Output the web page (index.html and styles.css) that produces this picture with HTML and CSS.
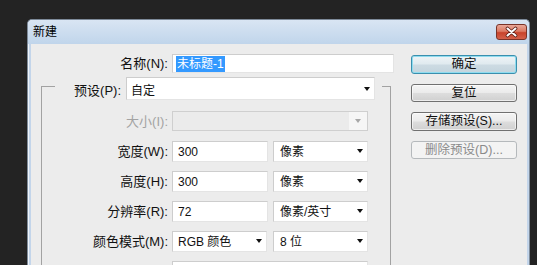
FILE: index.html
```html
<!DOCTYPE html>
<html lang="zh-CN">
<head>
    <meta charset="UTF-8">
    <title>新建</title>
    <link rel="stylesheet" href="styles.css">
</head>
<body>
    <div class="window">
        <!-- Title bar -->
        <div class="titlebar">
            <span class="title">新建</span>
            <button class="close-btn" title="关闭">
                <svg width="29" height="14" viewBox="0 0 29 14">
                    <path d="M10.5 3.5 L18.5 10.5 M18.5 3.5 L10.5 10.5" stroke="#5a1a12" stroke-width="3.6" stroke-linecap="round"/>
                    <path d="M10.5 3.5 L18.5 10.5 M18.5 3.5 L10.5 10.5" stroke="#fff" stroke-width="2" stroke-linecap="round"/>
                </svg>
            </button>
        </div>

        <div class="client">
            <div class="form">
                <div class="row name-row">
                    <label class="lbl name-lbl">名称(N):</label>
                    <div class="field name-field"><span class="selected">未标题-1</span></div>
                </div>

                <!-- Preset group box -->
                <div class="group">
                    <div class="legend">
                        <label class="lbl legend-lbl">预设(P):</label>
                        <div class="select preset-select">自定<span class="arrow"></span></div>
                    </div>

                    <div class="row">
                        <label class="lbl group-lbl disabled">大小(I):</label>
                        <div class="select size-select disabled-select"><span class="drop"><span class="arrow"></span></span></div>
                    </div>
                    <div class="row">
                        <label class="lbl group-lbl">宽度(W):</label>
                        <div class="field num-field">300</div>
                        <div class="select unit-select">像素<span class="arrow"></span></div>
                    </div>
                    <div class="row">
                        <label class="lbl group-lbl">高度(H):</label>
                        <div class="field num-field">300</div>
                        <div class="select unit-select">像素<span class="arrow"></span></div>
                    </div>
                    <div class="row">
                        <label class="lbl group-lbl">分辨率(R):</label>
                        <div class="field num-field">72</div>
                        <div class="select unit-select">像素/英寸<span class="arrow"></span></div>
                    </div>
                    <div class="row">
                        <label class="lbl group-lbl">颜色模式(M):</label>
                        <div class="select mode-select">RGB 颜色<span class="arrow"></span></div>
                        <div class="select unit-select">8 位<span class="arrow"></span></div>
                    </div>
                    <div class="row">
                        <label class="lbl group-lbl"></label>
                        <div class="field wide-field"></div>
                    </div>
                </div>
            </div>

            <!-- Dialog buttons -->
            <div class="buttons">
                <button class="btn default-btn">确定</button>
                <button class="btn">复位</button>
                <button class="btn">存储预设(S)...</button>
                <button class="btn" disabled>删除预设(D)...</button>
            </div>
        </div>
    </div>
</body>
</html>
```

FILE: styles.css
```css
body {
    margin: 0;
    padding: 19px 0 0 27px;
    background-color: #232323;
    font-family: "Liberation Sans", "Noto Sans CJK SC", sans-serif;
    font-size: 12px;
    color: #111;
    height: 265px;
    box-sizing: border-box;
    overflow: hidden;
}

.window {
    width: 503px;
    height: 246px;
    box-sizing: border-box;
    border: 1px solid #7d8a99;
    border-bottom: none;
    border-radius: 5px 5px 0 0;
    background: #c3d5ea;
    box-shadow: inset 1px 1px 0 #eef3f9;
    overflow: hidden;
}

/* Title bar */
.titlebar {
    height: 24px;
    display: flex;
    justify-content: space-between;
    align-items: flex-start;
    background: linear-gradient(#d9e5f3, #c0d5eb);
    border-radius: 4px 4px 0 0;
}

.title {
    align-self: center;
    padding-left: 5px;
    line-height: 16px;
    color: #000;
}

.close-btn {
    margin: 4px 2px 0 0;
    width: 31px;
    height: 16px;
    padding: 0;
    border: 1px solid #7a3328;
    border-radius: 3px;
    background: linear-gradient(#e9a899 0%, #dc7a63 45%, #c8432b 55%, #d4614a 100%);
    display: flex;
    align-items: center;
    justify-content: center;
}

.close-btn svg {
    display: block;
}

/* Client area */
.client {
    margin: 0 2px 0 3px;
    height: 230px;
    background-color: #ececec;
    display: flex;
    padding: 10px 10px 0 0;
    box-sizing: border-box;
}

.form {
    width: 363px;
}

.row {
    display: flex;
    align-items: center;
    height: 20px;
    margin-top: 10px;
}

.lbl {
    text-align: right;
    font-size: 13px;
    line-height: 16px;
    padding-top: 2px;
    white-space: nowrap;
    color: #111;
}

.lbl.disabled {
    color: #a3a3a3;
}

.name-row {
    margin-top: 0;
    height: 19px;
}

.name-lbl {
    width: 137px;
    margin-right: 4px;
    padding-top: 0;
}

.group-lbl {
    width: 126px;
    margin-right: 4px;
}

.field,
.select {
    box-sizing: border-box;
    height: 20px;
    background-color: #fff;
    border: 1px solid;
    border-color: #cdcdcd #e4e4e4 #e4e4e4 #cdcdcd;
    padding-left: 4px;
    padding-top: 2px;
    line-height: 16px;
    white-space: nowrap;
}

.select {
    display: flex;
    align-items: center;
    justify-content: space-between;
    padding-right: 4px;
}

.arrow {
    width: 0;
    height: 0;
    border-left: 3.5px solid transparent;
    border-right: 3.5px solid transparent;
    border-top: 4px solid #111;
}

.name-field {
    width: 222px;
    height: 19px;
    padding: 0 0 0 3px;
    display: flex;
    align-items: center;
}

.selected {
    background-color: #3399ff;
    color: #fff;
    line-height: 16px;
    padding: 0 1px;
}

/* Group box */
.group {
    margin: 13px 0 0 10px;
    width: 350px;
    height: 200px;
    box-sizing: border-box;
    border: 1px solid #a2a2a2;
    border-bottom: none;
}

.legend {
    display: flex;
    align-items: center;
    margin: -10px 0 0 13px;
    width: 327px;
    padding-right: 7px;
    box-sizing: border-box;
    background-color: #ececec;
}

.legend-lbl {
    width: 66px;
    margin-right: 5px;
    padding-top: 4px;
}

.preset-select {
    width: 249px;
    height: 23px;
    padding-top: 4px;
}

.preset-select .arrow {
    margin-top: -3px;
}

.legend + .row {
    margin-top: 11px;
}

.size-select {
    width: 196px;
    background-color: #ebebeb;
    border-color: #cfcfcf;
    padding: 0;
    justify-content: flex-end;
}

.drop {
    width: 18px;
    height: 18px;
    background-color: #f6f6f6;
    display: flex;
    align-items: center;
    justify-content: center;
}

.disabled-select .arrow {
    border-top-color: #a8a8a8;
}

.num-field {
    width: 96px;
    height: 21px;
    margin-right: 5px;
    padding-left: 5px;
}

.unit-select {
    width: 95px;
    height: 21px;
    padding-left: 6px;
}

.unit-select .arrow,
.mode-select .arrow {
    margin-top: -2px;
}

.mode-select {
    width: 95px;
    height: 21px;
    margin-right: 6px;
    padding-left: 5px;
}

.wide-field {
    width: 196px;
    height: 21px;
}

/* Buttons */
.buttons {
    margin-left: 17px;
    display: flex;
    flex-direction: column;
    gap: 10px;
    padding-top: 1px;
}

.btn {
    width: 106px;
    height: 18.5px;
    padding: 0;
    font-family: "Liberation Sans", "Noto Sans CJK SC", sans-serif;
    font-size: 12.5px;
    line-height: 14px;
    color: #111;
    border: 1px solid #707070;
    border-radius: 3px;
    background: linear-gradient(#f4f4f4 0%, #ebebeb 48%, #dddddd 52%, #d0d0d0 100%);
    box-shadow: inset 0 0 0 1px rgba(255, 255, 255, 0.6);
}

.default-btn {
    border-color: #3a8fae;
    background: linear-gradient(#eef4f7 0%, #e0eaef 48%, #cddbe3 52%, #c3d4dd 100%);
    box-shadow: inset 0 0 0 1px #8fdcef;
}

.btn:disabled {
    color: #8a8a8a;
    border-color: #b5b9bc;
    background: #f3f3f3;
    box-shadow: none;
}
```
